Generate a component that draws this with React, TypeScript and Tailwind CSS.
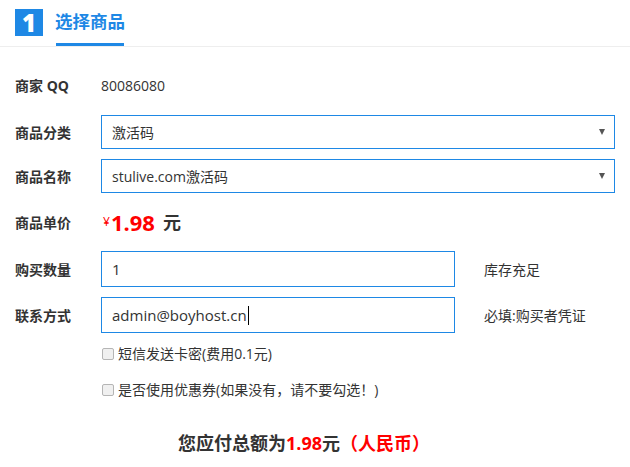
import React from 'react';

const FONT = { fontFamily: '"Open Sans", "Noto Sans CJK SC", sans-serif' };

function Label({ children }: { children: React.ReactNode }) {
  return <div className="w-[86px] shrink-0 text-[14px] font-bold text-[#333]">{children}</div>;
}

function FakeSelect({ value }: { value: string }) {
  return (
    <div className="flex h-[34px] w-[518px] items-center justify-between border border-[#1e88e5] pl-[10px] pr-[9px] text-[14px] text-[#333]">
      <span>{value}</span>
      <span className="h-0 w-0 border-x-[3.5px] border-t-[6px] border-x-transparent border-t-[#555]" />
    </div>
  );
}

function Checkbox({ label }: { label: string }) {
  return (
    <div className="flex items-center pl-[87px] text-[14px] text-[#333]">
      <span className="mr-[4px] h-[12px] w-[12px] rounded-[2px] border border-[#b5b5b5] bg-[#f0f0f0]" />
      <span>{label}</span>
    </div>
  );
}

export default function App() {
  return (
    <div className="h-[467px] w-[630px] bg-white text-[#333]" style={FONT}>
      {/* header */}
      <div className="flex h-[47px] items-start border-b border-[#eee] pl-[15px]">
        <div className="mt-[9px] flex h-[27px] w-[28px] items-center justify-center bg-[#1e88e5] text-[24px] font-extrabold leading-none text-white">
          1
        </div>
        <div className="ml-[12px] flex h-full flex-col justify-between">
          <div className="pt-[8px] text-[17.5px] font-bold leading-[26px] text-[#1e88e5]">选择商品</div>
          <div className="mx-[1px] h-[3px] bg-[#1e88e5]" />
        </div>
      </div>

      <div className="flex flex-col px-[15px]">
        <div className="mt-[21px] flex h-[34px] items-center">
          <Label>商家 QQ</Label>
          <span className="text-[14px]">80086080</span>
        </div>

        <div className="mt-[13px] flex items-center">
          <Label>商品分类</Label>
          <FakeSelect value="激活码" />
        </div>

        <div className="mt-[10px] flex items-center">
          <Label>商品名称</Label>
          <FakeSelect value="stulive.com激活码" />
        </div>

        <div className="mt-[12px] flex h-[34px] items-center">
          <Label>商品单价</Label>
          <span className="ml-[2px] text-[12px] text-[#ff0000]">¥</span>
          <span className="ml-[1px] text-[22px] font-bold text-[#ff0000]">1.98</span>
          <span className="ml-[8px] text-[18px] font-bold text-[#333]">元</span>
        </div>

        <div className="mt-[12px] flex items-center">
          <Label>购买数量</Label>
          <div className="flex h-[36px] w-[354px] items-center border border-[#1e88e5] pl-[10px] text-[15px]">1</div>
          <span className="ml-[29px] text-[14px]">库存充足</span>
        </div>

        <div className="mt-[10px] flex items-center">
          <Label>联系方式</Label>
          <div className="flex h-[36px] w-[354px] items-center border border-[#1e88e5] pl-[10px] text-[15px]">
            <span>admin@boyhost.cn</span>
            <span className="ml-[1px] h-[19px] w-px bg-black" />
          </div>
          <span className="ml-[29px] text-[14px]">必填:购买者凭证</span>
        </div>

        <div className="mt-[10px]">
          <Checkbox label="短信发送卡密(费用0.1元)" />
        </div>
        <div className="mt-[15px]">
          <Checkbox label="是否使用优惠券(如果没有，请不要勾选！)" />
        </div>

        <div className="mt-[29px] pl-[163px] text-[18px] font-bold leading-[28px]">
          您应付总额为<span className="text-[#ff0000]">1.98</span>元<span className="text-[#ff0000]">（人民币）</span>
        </div>
      </div>
    </div>
  );
}
